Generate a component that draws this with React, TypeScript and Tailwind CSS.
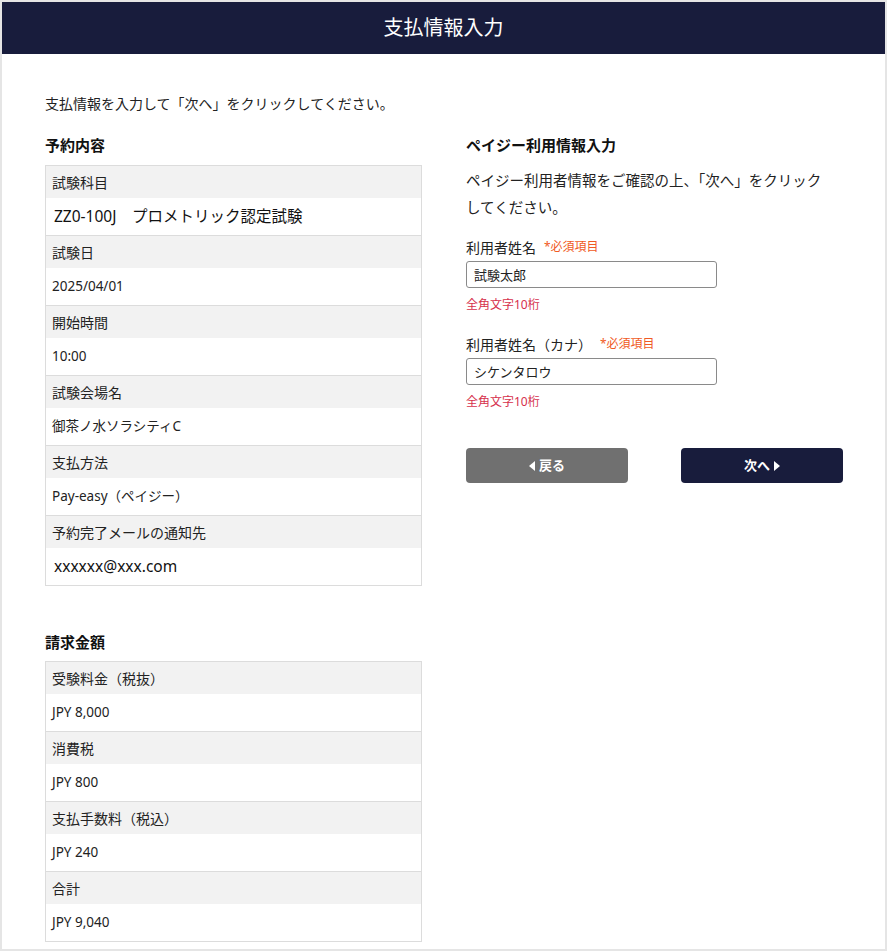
import React from 'react';

const font = { fontFamily: '"Noto Sans", "Noto Sans CJK JP", sans-serif' };

type Row = { label: string; value: string; big?: boolean };

const reservation: Row[] = [
  { label: '試験科目', value: 'ZZ0-100J　プロメトリック認定試験', big: true },
  { label: '試験日', value: '2025/04/01' },
  { label: '開始時間', value: '10:00' },
  { label: '試験会場名', value: '御茶ノ水ソラシティC' },
  { label: '支払方法', value: 'Pay-easy（ペイジー）' },
  { label: '予約完了メールの通知先', value: 'xxxxxx@xxx.com', big: true },
];

const billing: Row[] = [
  { label: '受験料金（税抜）', value: 'JPY 8,000' },
  { label: '消費税', value: 'JPY 800' },
  { label: '支払手数料（税込）', value: 'JPY 240' },
  { label: '合計', value: 'JPY 9,040' },
];

function InfoTable({ rows }: { rows: Row[] }) {
  return (
    <div className="border border-[#dcdcdc]">
      {rows.map((row, i) => (
        <div key={row.label} className={i > 0 ? 'border-t border-[#dcdcdc]' : ''}>
          <div className="h-[32px] bg-[#f2f2f2] px-[6px] flex items-center text-[14px] text-[#222]">{row.label}</div>
          <div
            className={
              row.big
                ? 'h-[37px] px-[8px] flex items-center text-[15.5px] text-[#111] bg-white'
                : 'h-[37px] px-[6px] flex items-center text-[13.5px] text-[#222] bg-white'
            }
          >
            {row.value}
          </div>
        </div>
      ))}
    </div>
  );
}

function Field({ label, value }: { label: string; value: string }) {
  return (
    <div>
      <div className="flex items-center h-[22px] text-[14px] text-[#222]">
        <span>{label}</span>
        <span className="ml-[8px] text-[12px] text-[#f05a24]">*必須項目</span>
      </div>
      <input
        readOnly
        value={value}
        className="mt-[3px] block w-[251px] h-[27px] rounded-[3px] border border-[#8a8a8a] px-[7px] text-[13px] text-[#222] outline-none"
        style={font}
      />
      <div className="mt-[8px] text-[12px] text-[#d6304c] h-[18px]">全角文字10桁</div>
    </div>
  );
}

export default function App() {
  return (
    <div className="w-[887px] h-[951px] bg-[#e5e5e5] p-[2px]" style={font}>
      <div className="bg-white h-[947px]">
        <div className="h-[52px] bg-[#181c3c] flex items-center justify-center text-white text-[20px]">
          支払情報入力
        </div>

        <div className="px-[43px] pt-[38px]">
          <p className="text-[14px] text-[#222] h-[22px] flex items-center">
            支払情報を入力して「次へ」をクリックしてください。
          </p>

          <div className="mt-[20px] grid grid-cols-[377px_377px] gap-x-[44px]">
            {/* left column */}
            <div>
              <h2 className="text-[15px] font-bold text-[#111] h-[22px] flex items-center">予約内容</h2>
              <div className="mt-[9px]">
                <InfoTable rows={reservation} />
              </div>

              <h2 className="mt-[45px] text-[15px] font-bold text-[#111] h-[22px] flex items-center">請求金額</h2>
              <div className="mt-[8px]">
                <InfoTable rows={billing} />
              </div>
            </div>

            {/* right column */}
            <div>
              <h2 className="text-[15px] font-bold text-[#111] h-[22px] flex items-center">ペイジー利用情報入力</h2>
              <p className="mt-[11px] text-[14.5px] leading-[27px] text-[#222]">
                ペイジー利用者情報をご確認の上、「次へ」をクリック
                <br />
                してください。
              </p>

              <div className="mt-[15px]">
                <Field label="利用者姓名" value="試験太郎" />
              </div>
              <div className="mt-[19px]">
                <Field label="利用者姓名（カナ）" value="シケンタロウ" />
              </div>

              <div className="mt-[37px] flex justify-between">
                <button className="w-[162px] h-[35px] rounded-[4px] bg-[#707070] text-white text-[13px] font-bold flex items-center justify-center gap-[3px]">
                  <svg width="7" height="10" viewBox="0 0 7 10"><path d="M6 0 L0 5 L6 10 Z" fill="white" /></svg>
                  戻る
                </button>
                <button className="w-[162px] h-[35px] rounded-[4px] bg-[#181c3c] text-white text-[13px] font-bold flex items-center justify-center gap-[3px]">
                  次へ
                  <svg width="7" height="10" viewBox="0 0 7 10"><path d="M1 0 L7 5 L1 10 Z" fill="white" /></svg>
                </button>
              </div>
            </div>
          </div>
        </div>
      </div>
    </div>
  );
}
